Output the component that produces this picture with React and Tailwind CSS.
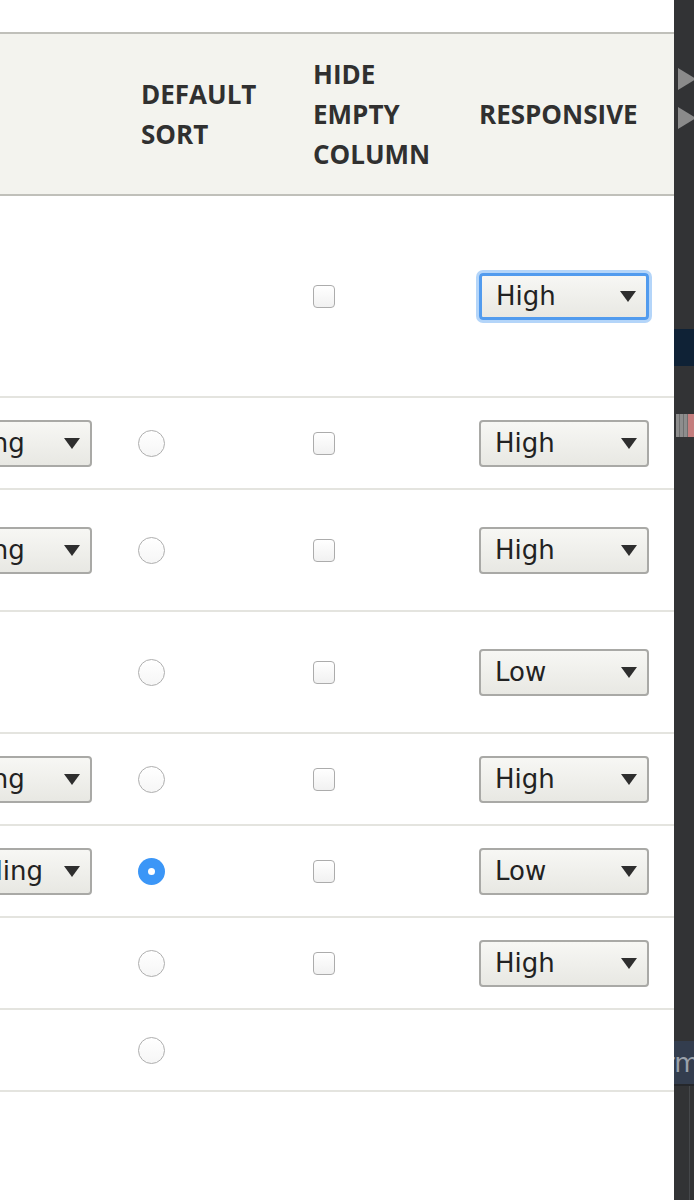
import React from "react";

const rows = [
  { h: "h-[202px]", sort: null, radio: null, check: true, resp: "High", focused: true },
  { h: "h-[92px]", sort: "Ascending", radio: "off", check: true, resp: "High" },
  { h: "h-[122px]", sort: "Ascending", radio: "off", check: true, resp: "High" },
  { h: "h-[122px]", sort: null, radio: "off", check: true, resp: "Low" },
  { h: "h-[92px]", sort: "Ascending", radio: "off", check: true, resp: "High" },
  { h: "h-[92px]", sort: "Descending", radio: "on", check: true, resp: "Low" },
  { h: "h-[92px]", sort: null, radio: "off", check: true, resp: "High" },
  { h: "h-[82px]", sort: null, radio: "off", check: false, resp: null },
];

const Arrow = () => (
  <svg width="16" height="11" viewBox="0 0 16 11" className="shrink-0">
    <polygon points="0,0 16,0 8,11" fill="#2e2e2e" />
  </svg>
);

function Select({ label, focused, width }) {
  return (
    <div
      className={`flex h-[47px] shrink-0 items-center justify-between rounded-[4px] bg-linear-to-b from-[#f7f7f4] to-[#e8e8e3] pl-[14px] pr-[10px] text-[26px] leading-none text-[#222] ${
        focused
          ? "border-[3px] border-[#519bee] shadow-[0_0_0_3px_#b4d5f9]"
          : "border-2 border-[#a9a9a6]"
      } ${width}`}
    >
      <span className="whitespace-nowrap">{label}</span>
      <Arrow />
    </div>
  );
}

const Radio = ({ on }) =>
  on ? (
    <div className="ml-[-3px] flex h-[27px] w-[27px] items-center justify-center rounded-full bg-[#3b96f7]">
      <div className="h-[7px] w-[7px] rounded-full bg-white" />
    </div>
  ) : (
    <div className="ml-[-3px] h-[27px] w-[27px] rounded-full border border-[#aeaeae] bg-linear-to-b from-white to-[#f6f6f6]" />
  );

const Checkbox = () => (
  <div className="h-[23px] w-[22px] rounded-[4px] border border-[#acacac] bg-linear-to-b from-white to-[#f1f1f1]" />
);

const SideTriangle = ({ className }) => (
  <svg width="18" height="22" viewBox="0 0 18 22" className={className}>
    <polygon points="0,0 18,11 0,22" fill="#8b8b8b" />
  </svg>
);

export default function App() {
  return (
    <div
      className="flex min-h-[1200px] w-[694px] bg-white"
      style={{ fontFamily: '"DejaVu Sans", Verdana, sans-serif' }}
    >
      {/* table area */}
      <div className="flex w-[674px] flex-col">
        <div className="h-[32px]" />

        {/* header */}
        <div
          className="flex h-[164px] border-y-2 border-[#c0c0ba] bg-[#f3f3ee] text-[26px] font-bold leading-[40px] text-[#303030]"
          style={{ fontFamily: '"Open Sans", "DejaVu Sans", sans-serif' }}
        >
          <div className="w-[121px]" />
          <div className="flex w-[172px] items-center pl-[20px]">
            <div>
              DEFAULT
              <br />
              SORT
            </div>
          </div>
          <div className="flex w-[166px] items-center pl-[20px]">
            <div>
              HIDE
              <br />
              EMPTY
              <br />
              COLUMN
            </div>
          </div>
          <div className="flex w-[215px] items-center pl-[20px]">RESPONSIVE</div>
        </div>

        {/* rows */}
        {rows.map((r, i) => (
          <div key={i} className={`flex items-center border-b-2 border-[#e4e4df] ${r.h}`}>
            <div className="flex w-[121px] justify-end pr-[29px]">
              {r.sort && <Select label={r.sort} width="w-[218px]" />}
            </div>
            <div className="flex w-[172px] items-center pl-[20px]">
              {r.radio && <Radio on={r.radio === "on"} />}
            </div>
            <div className="flex w-[166px] items-center pl-[20px]">
              {r.check && <Checkbox />}
            </div>
            <div className="flex w-[215px] items-center pl-[20px]">
              {r.resp && <Select label={r.resp} focused={r.focused} width="w-[170px]" />}
            </div>
          </div>
        ))}
      </div>

      {/* dark side strip */}
      <div className="flex w-[20px] flex-col overflow-hidden bg-[#323335]">
        <SideTriangle className="ml-[4px] mt-[68px] shrink-0" />
        <SideTriangle className="ml-[4px] mt-[17px] shrink-0" />
        <div className="mt-[200px] h-[37px] shrink-0 bg-[#0f2236]" />
        <div className="mt-[48px] flex h-[23px] shrink-0">
          <div className="ml-[2px] w-[12px] bg-[repeating-linear-gradient(90deg,#8d8d8d_0_3px,#6f6f6f_3px_4px)]" />
          <div className="w-[6px] bg-[#c47e7e]" />
        </div>
        <div className="mt-[604px] flex h-[45px] shrink-0 items-center overflow-hidden border-b-2 border-[#25272b] bg-[#333d4e]">
          <span className="ml-[-10px] whitespace-nowrap text-[26px] leading-none text-[#9aa1aa]">rm</span>
        </div>
        <div className="ml-[15px] h-[120px] w-px shrink-0 bg-[#45474a]" />
      </div>
    </div>
  );
}
